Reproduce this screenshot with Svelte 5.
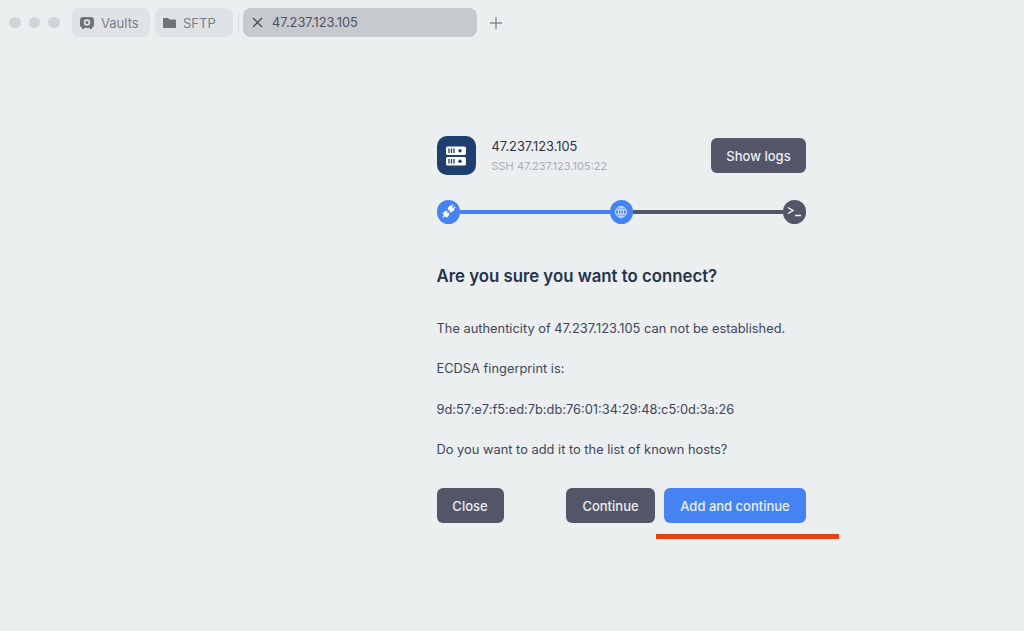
<script lang="ts">
    const tabs = [
        { label: "Vaults", icon: "vault" },
        { label: "SFTP", icon: "folder" },
    ];
    const host = "47.237.123.105";
    const lines = [
        `The authenticity of ${host} can not be established.`,
        "ECDSA fingerprint is:",
        "9d:57:e7:f5:ed:7b:db:76:01:34:29:48:c5:0d:3a:26",
        "Do you want to add it to the list of known hosts?",
    ];
</script>

<div class="page">
    <header class="tabbar">
        <div class="lights">
            <span></span>
            <span></span>
            <span></span>
        </div>
        <div class="tabs">
            {#each tabs as tab}
                <div class="tab">
                    {#if tab.icon === "vault"}
                        <svg width="14" height="14" viewBox="0 0 14 14">
                            <path d="M3 1h8a3 3 0 0 1 3 3v5a3 3 0 0 1-2 2.800V13h-2v-1H4v1H2v-1.200A3 3 0 0 1 0 9V4a3 3 0 0 1 3-3z" fill="#6f737c" />
                            <circle cx="7" cy="6.500" r="3.200" fill="#dfe3e6" />
                            <circle cx="7" cy="6.500" r="1.500" fill="#6f737c" />
                        </svg>
                    {:else}
                        <svg width="13" height="12" viewBox="0 0 13 12">
                            <path d="M0 2a1 1 0 0 1 1-1h4l1.500 1.500H12a1 1 0 0 1 1 1V10a1 1 0 0 1-1 1H1a1 1 0 0 1-1-1z" fill="#6f737c" />
                        </svg>
                    {/if}
                    <span>{tab.label}</span>
                </div>
            {/each}
            <i class="divider"></i>
            <div class="tab active">
                <svg width="11" height="11" viewBox="0 0 11 11">
                    <path d="M1 1l9 9M10 1l-9 9" stroke="#4e515f" stroke-width="1.400" fill="none" />
                </svg>
                <span>{host}</span>
            </div>
            <svg class="plus" width="12" height="12" viewBox="0 0 12 12">
                <path d="M6 0v12M0 6h12" stroke="#83878f" stroke-width="1.300" fill="none" />
            </svg>
        </div>
    </header>

    <main class="panel">
        <div class="head">
            <div class="server">
                <svg width="20" height="20" viewBox="0 0 20 20">
                    <rect x="0" y="0.500" width="20" height="8.500" rx="1.500" fill="#fff" />
                    <rect x="0" y="11" width="20" height="8.500" rx="1.500" fill="#fff" />
                    <path d="M3 2.500v4.500M5.500 2.500v4.500M8 2.500v4.500M3 13v4.500M5.500 13v4.500M8 13v4.500" stroke="#1f3f6e" stroke-width="1.300" />
                    <circle cx="14" cy="4.800" r="1.700" fill="#1f3f6e" />
                    <circle cx="14" cy="15.200" r="1.700" fill="#1f3f6e" />
                </svg>
            </div>
            <div class="title">
                <div class="name">{host}</div>
                <div class="sub">SSH {host}:22</div>
            </div>
            <button class="btn dark logs">Show logs</button>
        </div>

        <div class="steps">
            <span class="dot blue">
                <svg width="15" height="15" viewBox="0 0 15 15">
                    <g transform="rotate(45 7.500 7.500)" fill="#fff">
                        <path d="M4.500 3h6v2.500a3 3 0 0 1-2.300 2.900V7.100H6.800v1.300A3 3 0 0 1 4.500 5.500z" transform="translate(0 -1.200)" />
                        <path d="M4.500 12h6V9.500a3 3 0 0 0-2.300-2.900v1.300H6.800V6.600A3 3 0 0 0 4.500 9.500z" transform="translate(0 1.200)" />
                        <rect x="5.400" y="-0.500" width="1.300" height="2.500" />
                        <rect x="8.300" y="-0.500" width="1.300" height="2.500" />
                        <rect x="6.800" y="13" width="1.400" height="2.500" />
                    </g>
                </svg>
            </span>
            <i class="bar blue"></i>
            <span class="dot blue">
                <svg width="14" height="14" viewBox="0 0 14 14" fill="none" stroke="#d6e4fc" stroke-width="1">
                    <circle cx="7" cy="7" r="5.500" />
                    <ellipse cx="7" cy="7" rx="2.500" ry="5.500" />
                    <path d="M2 5h10M2 9h10M7 1.500v11" />
                </svg>
            </span>
            <i class="bar dark"></i>
            <span class="dot dark prompt">
                <svg width="15" height="11" viewBox="0 0 15 11" fill="none" stroke="#fff" stroke-width="1.400">
                    <path d="M1 1.500l5 3-5 3M8 9.500h6" />
                </svg>
            </span>
        </div>

        <h1>Are you sure you want to connect?</h1>

        <div class="message">
            {#each lines as line}
                <p>{line}</p>
            {/each}
        </div>

        <div class="actions">
            <button class="btn dark close">Close</button>
            <div class="right">
                <button class="btn dark">Continue</button>
                <div class="marked">
                    <button class="btn blue-btn">Add and continue</button>
                    <i class="underline"></i>
                </div>
            </div>
        </div>
    </main>
</div>

<style>
    :global(body) {
        background: #ebeff0;
    }

    .page {
        height: 631px;
        overflow: hidden;
        background: #ebeff0;
        font-family: Inter, "Noto Sans", sans-serif;
    }

    .tabbar {
        display: flex;
        align-items: center;
        height: 29px;
        padding: 8px 0 0 9px;
    }

    .lights {
        display: flex;
        gap: 8px;
        width: 63px;
    }

    .lights span {
        width: 11.500px;
        height: 11.500px;
        border-radius: 50%;
        background: #d1d5d7;
    }

    .tabs {
        display: flex;
        align-items: center;
        gap: 5px;
    }

    .tab {
        display: flex;
        align-items: center;
        gap: 7px;
        box-sizing: border-box;
        width: 78px;
        height: 29px;
        padding-left: 8px;
        border-radius: 8px;
        background: #dfe3e6;
        color: #7a7e87;
        font-size: 13px;
    }

    .divider {
        width: 1px;
        height: 18px;
        margin-right: -1px;
        background: #d8dcde;
    }

    .tab.active {
        width: 234px;
        padding-left: 9px;
        gap: 9px;
        background: #c6c9ce;
        color: #4e515f;
        font-size: 12.800px;
    }

    .plus {
        margin-left: 8px;
    }

    .panel {
        box-sizing: border-box;
        width: 369.500px;
        margin: 99px 0 0 436.500px;
    }

    .head {
        display: flex;
        align-items: center;
    }

    .server {
        display: flex;
        align-items: center;
        justify-content: center;
        width: 39px;
        height: 39px;
        border-radius: 10px;
        background: #1f3f6e;
    }

    .title {
        flex: 1;
        margin-left: 16px;
    }

    .name {
        color: #2d3142;
        font-size: 12.800px;
        line-height: 16px;
    }

    .sub {
        margin-top: 4px;
        color: #a9adb8;
        font-size: 11px;
        line-height: 14px;
    }

    .btn {
        height: 35px;
        padding: 0;
        border: 0;
        border-radius: 6px;
        color: #eceef2;
        font-family: inherit;
        font-size: 13px;
        font-weight: 500;
    }

    .btn.dark {
        width: 89px;
        background: #535568;
    }

    .btn.logs {
        width: 95px;
    }

    .btn.close {
        width: 67px;
    }

    .blue-btn {
        width: 142px;
        background: #4583f2;
    }

    .steps {
        display: flex;
        align-items: center;
        margin-top: 25px;
    }

    .dot {
        display: flex;
        flex: none;
        align-items: center;
        justify-content: center;
        width: 23.500px;
        height: 23.500px;
        border-radius: 50%;
    }

    .dot.blue {
        background: #4583f2;
    }

    .dot.dark {
        background: #535568;
    }

    .bar {
        flex: 1;
        height: 4px;
    }

    .bar.blue {
        background: #4583f2;
    }

    .bar.dark {
        background: #535568;
    }

    h1 {
        margin: 40.500px 0 0;
        color: #24344d;
        font-size: 16.800px;
        font-weight: 600;
        line-height: 24px;
    }

    .message {
        display: flex;
        flex-direction: column;
        gap: 24px;
        margin-top: 33px;
    }

    .message p {
        margin: 0;
        color: #40465a;
        font-size: 12.850px;
        line-height: 16.300px;
    }

    .actions {
        display: flex;
        justify-content: space-between;
        margin-top: 30px;
    }

    .right {
        display: flex;
        gap: 9px;
    }

    .marked {
        position: relative;
        display: flex;
    }

    .underline {
        position: absolute;
        top: 45.500px;
        left: -8px;
        width: 183px;
        height: 5px;
        background: #e5430f;
    }
</style>
